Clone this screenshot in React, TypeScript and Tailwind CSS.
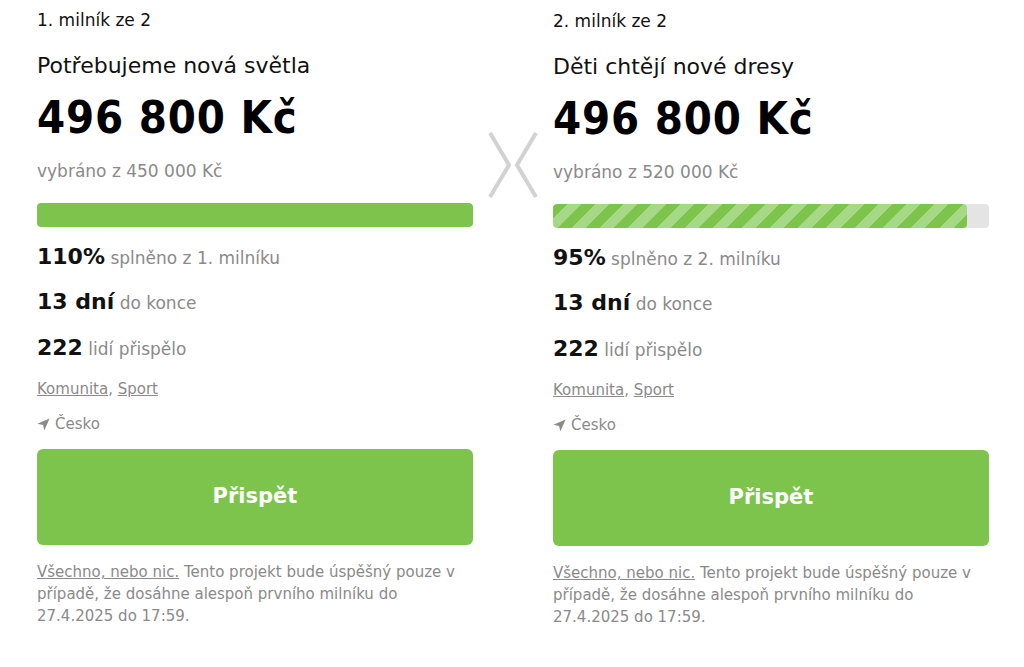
import React from 'react';

type Milestone = {
  label: string;
  title: string;
  goal: string;
  percent: number;
  milestoneNo: number;
  striped: boolean;
};

const MILESTONES: Milestone[] = [
  { label: '1. milník ze 2', title: 'Potřebujeme nová světla', goal: '450 000 Kč', percent: 110, milestoneNo: 1, striped: false },
  { label: '2. milník ze 2', title: 'Děti chtějí nové dresy', goal: '520 000 Kč', percent: 95, milestoneNo: 2, striped: true },
];

const stripes =
  'repeating-linear-gradient(135deg, #7dc44d 0px, #7dc44d 10px, #a5d985 10px, #a5d985 20px)';

const condensed = { fontFamily: '"DejaVu Sans Condensed", "DejaVu Sans", sans-serif' };

const MilestoneColumn: React.FC<{ m: Milestone }> = ({ m }) => (
  <div className="w-[436px] flex flex-col">
    <div className="text-[17px] leading-[24px] text-[#111] mt-[8px]">{m.label}</div>
    <h2 className="text-[22px] leading-[30px] text-[#111] mt-[19px]">{m.title}</h2>
    <div className="text-[45px] leading-[54px] font-bold text-black mt-[10px] tracking-[0.8px]" style={condensed}>
      496 800 Kč
    </div>
    <div className="text-[17px] leading-[24px] text-[#8a8a8a] mt-[14px]">vybráno z {m.goal}</div>

    <div className="mt-[20px] h-[24px] rounded-[4px] bg-[#e4e4e4] overflow-hidden">
      <div
        className="h-full rounded-[4px] bg-[#7dc44d]"
        style={{
          width: `${Math.min(m.percent, 100)}%`,
          backgroundImage: m.striped ? stripes : undefined,
        }}
      />
    </div>

    <div className="mt-[16px] leading-[28px] whitespace-nowrap">
      <span className="text-[22px] font-semibold text-[#111]">{m.percent}%</span>
      <span className="text-[17px] text-[#8a8a8a]"> splněno z {m.milestoneNo}. milníku</span>
    </div>
    <div className="mt-[15px] leading-[28px] whitespace-nowrap">
      <span className="text-[22px] font-semibold text-[#111]">13 dní</span>
      <span className="text-[17px] text-[#8a8a8a]"> do konce</span>
    </div>
    <div className="mt-[16px] leading-[28px] whitespace-nowrap">
      <span className="text-[22px] font-semibold text-[#111]">222</span>
      <span className="text-[17px] text-[#8a8a8a]"> lidí přispělo</span>
    </div>

    <div className="mt-[14px] text-[15px] leading-[22px] text-[#8a8a8a]">
      <a className="underline">Komunita</a>, <a className="underline">Sport</a>
    </div>
    <div className="mt-[13px] text-[15px] leading-[22px] text-[#8a8a8a] flex items-center gap-[5px]">
      <svg width="13" height="13" viewBox="0 0 16 16" fill="#8a8a8a">
        <path d="M15.5 0.5 L0.5 7 L7.5 8.5 L9 15.5 Z" />
      </svg>
      Česko
    </div>

    <button className="mt-[14px] h-[96px] rounded-[6px] bg-[#7dc44d] text-white text-[21px] font-bold">
      Přispět
    </button>

    <p className="mt-[16px] text-[15px] leading-[22px] text-[#8a8a8a]">
      <a className="underline">Všechno, nebo nic.</a> Tento projekt bude úspěšný pouze v případě, že dosáhne
      alespoň prvního milníku do 27.4.2025 do 17:59.
    </p>
  </div>
);

const Separator: React.FC = () => (
  <div className="w-[80px] flex justify-center pt-[130px]">
    <svg width="64" height="70" viewBox="0 0 64 70" fill="none" stroke="#d2d2d2" strokeWidth="4">
      <path d="M9 3 L28 35 L9 67" />
      <path d="M55 3 L36 35 L55 67" />
    </svg>
  </div>
);

export default function App() {
  return (
    <div
      className="w-[1024px] h-[667px] bg-white flex pl-[37px] overflow-hidden"
      style={{ fontFamily: '"DejaVu Sans", sans-serif' }}
    >
      <MilestoneColumn m={MILESTONES[0]} />
      <Separator />
      <div className="pt-[1px]">
        <MilestoneColumn m={MILESTONES[1]} />
      </div>
    </div>
  );
}
